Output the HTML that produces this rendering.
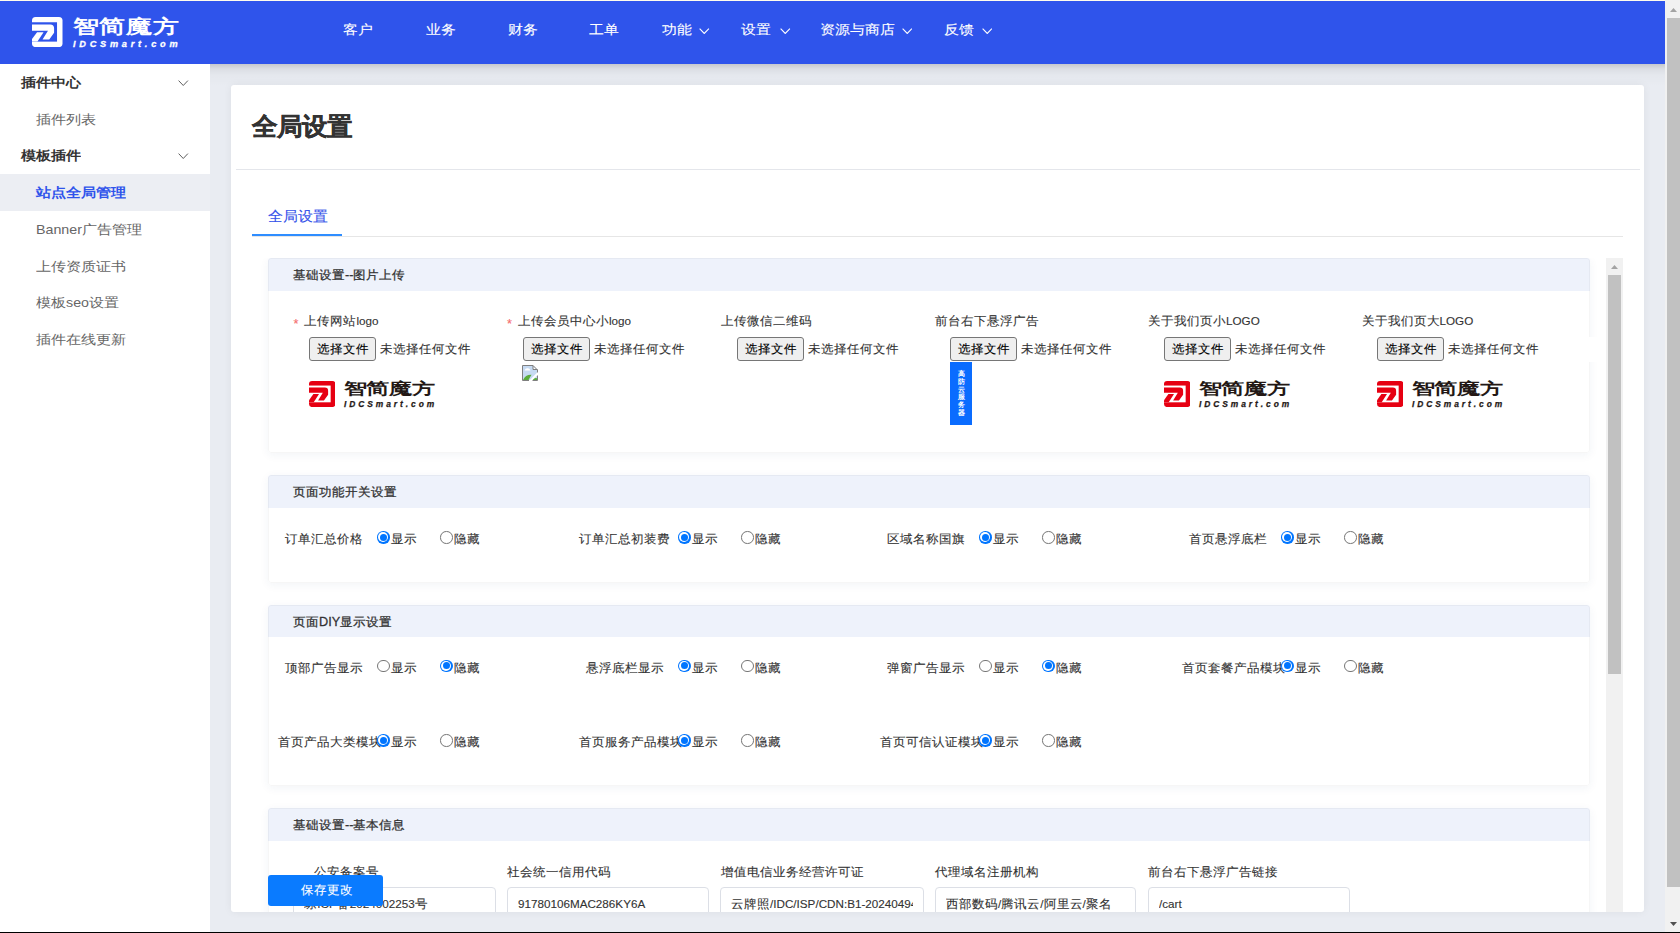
<!DOCTYPE html><html><head><meta charset="utf-8"><style>
html,body{margin:0;padding:0;}
body{width:1680px;height:933px;overflow:hidden;position:relative;background:#fff;font-family:"Liberation Sans", sans-serif;}
.a{position:absolute;display:block;}
.t{position:absolute;white-space:nowrap;-webkit-text-stroke:0.12px currentColor;}
</style></head><body>
<div class="a" style="left:0;top:0;width:1665px;height:1px;background:#fffcec"></div>
<div class="a" style="left:0;top:1px;width:1665px;height:63px;background:#2f54eb"></div>
<svg class="a" style="left:32.07px;top:16.9px" width="30.5" height="30.1" viewBox="110 115 725 715" preserveAspectRatio="none">
<rect x="110" y="115" width="725" height="715" rx="85" fill="#fff"/>
<rect x="110" y="240" width="595" height="460" fill="#2f54eb"/>
<path d="M110 295 H545 Q635 295 635 385 V490 L520 650 H360 L490 440 H110 Z" fill="#fff"/>
<path d="M110 640 L230 475 H385 L240 700 H110 Z" fill="#fff"/>
</svg>
<div class="t" style="left:72.5px;top:17.2px;font-size:26px;line-height:26px;color:#fff;font-weight:bold;-webkit-text-stroke:0;transform:scaleY(0.73);transform-origin:0 0;letter-spacing:0.8px;">智简魔方</div>
<div class="t" style="left:73px;top:40px;font-size:9.2px;line-height:9.2px;color:#fff;font-weight:bold;-webkit-text-stroke:0;font-style:italic;letter-spacing:3.75px;-webkit-text-stroke:0.3px #fff;">IDCSmart.com</div>
<div class="t" style="left:343px;top:23px;font-size:15px;line-height:15px;color:#fff;transform:scaleY(0.875);transform-origin:0 0;">客户</div>
<div class="t" style="left:426px;top:23px;font-size:15px;line-height:15px;color:#fff;transform:scaleY(0.875);transform-origin:0 0;">业务</div>
<div class="t" style="left:507.5px;top:23px;font-size:15px;line-height:15px;color:#fff;transform:scaleY(0.875);transform-origin:0 0;">财务</div>
<div class="t" style="left:589px;top:23px;font-size:15px;line-height:15px;color:#fff;transform:scaleY(0.875);transform-origin:0 0;">工单</div>
<div class="t" style="left:662px;top:23px;font-size:15px;line-height:15px;color:#fff;transform:scaleY(0.875);transform-origin:0 0;">功能</div>
<svg class="a" style="left:699px;top:27.5px" width="10.5" height="6.2" viewBox="0 0 10.5 6.2"><polyline points="0.6,0.6 5.25,5.5 9.9,0.6" fill="none" stroke="#fff" stroke-width="1.1"/></svg>
<div class="t" style="left:741px;top:23px;font-size:15px;line-height:15px;color:#fff;transform:scaleY(0.875);transform-origin:0 0;">设置</div>
<svg class="a" style="left:780px;top:27.5px" width="10.5" height="6.2" viewBox="0 0 10.5 6.2"><polyline points="0.6,0.6 5.25,5.5 9.9,0.6" fill="none" stroke="#fff" stroke-width="1.1"/></svg>
<div class="t" style="left:820px;top:23px;font-size:15px;line-height:15px;color:#fff;transform:scaleY(0.875);transform-origin:0 0;">资源与商店</div>
<svg class="a" style="left:901.5px;top:27.5px" width="10.5" height="6.2" viewBox="0 0 10.5 6.2"><polyline points="0.6,0.6 5.25,5.5 9.9,0.6" fill="none" stroke="#fff" stroke-width="1.1"/></svg>
<div class="t" style="left:943.5px;top:23px;font-size:15px;line-height:15px;color:#fff;transform:scaleY(0.875);transform-origin:0 0;">反馈</div>
<svg class="a" style="left:981.5px;top:27.5px" width="10.5" height="6.2" viewBox="0 0 10.5 6.2"><polyline points="0.6,0.6 5.25,5.5 9.9,0.6" fill="none" stroke="#fff" stroke-width="1.1"/></svg>
<div class="a" style="left:0;top:64px;width:210px;height:868px;background:#fff"></div>
<div class="a" style="left:0;top:174px;width:210px;height:37px;background:#eceef3"></div>
<div class="t" style="left:21px;top:76.2px;font-size:15px;line-height:15px;color:#333;font-weight:bold;-webkit-text-stroke:0;transform:scaleY(0.86);transform-origin:0 0;">插件中心</div>
<svg class="a" style="left:178px;top:79.5px" width="10.5" height="6.2" viewBox="0 0 10.5 6.2"><polyline points="0.6,0.6 5.25,5.5 9.9,0.6" fill="none" stroke="#555" stroke-width="0.95"/></svg>
<div class="t" style="left:36px;top:113px;font-size:15px;line-height:15px;color:#666;transform:scaleY(0.86);transform-origin:0 0;-webkit-text-stroke:0;">插件列表</div>
<div class="t" style="left:21px;top:149px;font-size:15px;line-height:15px;color:#333;font-weight:bold;-webkit-text-stroke:0;transform:scaleY(0.86);transform-origin:0 0;">模板插件</div>
<svg class="a" style="left:178px;top:152.5px" width="10.5" height="6.2" viewBox="0 0 10.5 6.2"><polyline points="0.6,0.6 5.25,5.5 9.9,0.6" fill="none" stroke="#555" stroke-width="0.95"/></svg>
<div class="t" style="left:36px;top:186px;font-size:15px;line-height:15px;color:#2f54eb;font-weight:600;-webkit-text-stroke:0;transform:scaleY(0.86);transform-origin:0 0;">站点全局管理</div>
<div class="t" style="left:36px;top:222.5px;font-size:15px;line-height:15px;color:#666;transform:scaleY(0.86);transform-origin:0 0;-webkit-text-stroke:0;"><span style="font-size:0.95em">Banner</span>广告管理</div>
<div class="t" style="left:36px;top:259.5px;font-size:15px;line-height:15px;color:#666;transform:scaleY(0.86);transform-origin:0 0;-webkit-text-stroke:0;">上传资质证书</div>
<div class="t" style="left:36px;top:296px;font-size:15px;line-height:15px;color:#666;transform:scaleY(0.86);transform-origin:0 0;-webkit-text-stroke:0;">模板<span style="font-size:0.95em">seo</span>设置</div>
<div class="t" style="left:36px;top:332.5px;font-size:15px;line-height:15px;color:#666;transform:scaleY(0.86);transform-origin:0 0;-webkit-text-stroke:0;">插件在线更新</div>
<div class="a" style="left:210px;top:64px;width:1455px;height:868px;background:#e9ecf2"></div>
<div class="a" style="left:210px;top:64px;width:1455px;height:22px;background:linear-gradient(rgba(0,0,0,0.15) 0px,rgba(0,0,0,0.06) 5px,rgba(0,0,0,0.02) 11px,rgba(0,0,0,0) 22px)"></div>
<div class="a" style="left:231px;top:85px;width:1413px;height:827px;background:#fff;border-radius:3px;box-shadow:0 0 9px rgba(0,10,30,0.06)"></div>
<div class="t" style="left:252px;top:114px;font-size:25px;line-height:25px;color:#333;font-weight:bold;-webkit-text-stroke:0;transform:scaleY(0.98);transform-origin:0 0;-webkit-text-stroke:0.35px #333;">全局设置</div>
<div class="a" style="left:236px;top:169px;width:1404px;height:1px;background:#e4e6eb"></div>
<div class="t" style="left:268px;top:209px;font-size:15px;line-height:15px;color:#3653ea;transform:scaleY(0.94);transform-origin:0 0;">全局设置</div>
<div class="a" style="left:252px;top:236px;width:1371px;height:1px;background:#e6e6e6"></div>
<div class="a" style="left:252px;top:234px;width:90px;height:2px;background:#2f8dff"></div>
<div class="a" style="left:252px;top:258px;width:1371px;height:654px;overflow:hidden">
<div class="a" style="left:16px;top:0px;width:1322px;height:195px;background:#fff;border-radius:3px;box-shadow:0 2px 10px rgba(30,60,120,0.06);overflow:hidden"><div class="a" style="left:0;top:0;width:1322px;height:32.5px;background:#eef2fb"></div><div class="a" style="left:0;top:0;width:1320px;height:193px;border:1px solid rgba(0,0,0,0.035);border-radius:3px"></div></div>
<div class="t" style="left:41px;top:11px;font-size:12.7px;line-height:12.7px;color:#333;transform:scaleY(0.96);transform-origin:0 0;-webkit-text-stroke:0.28px #333;">基础设置<span style="font-size:1.0em">--</span>图片上传</div>
<div class="a" style="left:16px;top:217px;width:1322px;height:107.5px;background:#fff;border-radius:3px;box-shadow:0 2px 10px rgba(30,60,120,0.06);overflow:hidden"><div class="a" style="left:0;top:0;width:1322px;height:33px;background:#eef2fb"></div><div class="a" style="left:0;top:0;width:1320px;height:105.5px;border:1px solid rgba(0,0,0,0.035);border-radius:3px"></div></div>
<div class="t" style="left:41px;top:228px;font-size:12.7px;line-height:12.7px;color:#333;transform:scaleY(0.96);transform-origin:0 0;-webkit-text-stroke:0.28px #333;">页面功能开关设置</div>
<div class="a" style="left:16px;top:347px;width:1322px;height:181px;background:#fff;border-radius:3px;box-shadow:0 2px 10px rgba(30,60,120,0.06);overflow:hidden"><div class="a" style="left:0;top:0;width:1322px;height:32px;background:#eef2fb"></div><div class="a" style="left:0;top:0;width:1320px;height:179px;border:1px solid rgba(0,0,0,0.035);border-radius:3px"></div></div>
<div class="t" style="left:41px;top:358px;font-size:12.7px;line-height:12.7px;color:#333;transform:scaleY(0.96);transform-origin:0 0;-webkit-text-stroke:0.28px #333;">页面<span style="font-size:1.0em">DIY</span>显示设置</div>
<div class="a" style="left:16px;top:550px;width:1322px;height:192px;background:#fff;border-radius:3px;box-shadow:0 2px 10px rgba(30,60,120,0.06);overflow:hidden"><div class="a" style="left:0;top:0;width:1322px;height:33px;background:#eef2fb"></div><div class="a" style="left:0;top:0;width:1320px;height:190px;border:1px solid rgba(0,0,0,0.035);border-radius:3px"></div></div>
<div class="t" style="left:41px;top:561px;font-size:12.7px;line-height:12.7px;color:#333;transform:scaleY(0.96);transform-origin:0 0;-webkit-text-stroke:0.28px #333;">基础设置<span style="font-size:1.0em">--</span>基本信息</div>
<div class="t" style="left:41.39999999999998px;top:59.5px;font-size:12.7px;line-height:12.7px;color:#f56c6c;">*</div>
<div class="t" style="left:52.39999999999998px;top:57px;font-size:12.7px;line-height:12.7px;color:#333;transform:scaleY(0.96);transform-origin:0 0;">上传网站<span style="font-size:0.92em">logo</span></div>
<div class="a" style="left:57.099999999999966px;top:79px;width:65px;height:22px;background:#efefef;border:1px solid #767676;border-radius:3px"></div>
<div class="t" style="left:65.09999999999997px;top:85px;font-size:12.7px;line-height:12.7px;color:#000;transform:scaleY(0.96);transform-origin:0 0;">选择文件</div>
<div class="t" style="left:128.09999999999997px;top:85px;font-size:12.7px;line-height:12.7px;color:#333;transform:scaleY(0.96);transform-origin:0 0;">未选择任何文件</div>
<div class="t" style="left:255px;top:59.5px;font-size:12.7px;line-height:12.7px;color:#f56c6c;">*</div>
<div class="t" style="left:266px;top:57px;font-size:12.7px;line-height:12.7px;color:#333;transform:scaleY(0.96);transform-origin:0 0;">上传会员中心小<span style="font-size:0.92em">logo</span></div>
<div class="a" style="left:270.70000000000005px;top:79px;width:65px;height:22px;background:#efefef;border:1px solid #767676;border-radius:3px"></div>
<div class="t" style="left:278.70000000000005px;top:85px;font-size:12.7px;line-height:12.7px;color:#000;transform:scaleY(0.96);transform-origin:0 0;">选择文件</div>
<div class="t" style="left:341.70000000000005px;top:85px;font-size:12.7px;line-height:12.7px;color:#333;transform:scaleY(0.96);transform-origin:0 0;">未选择任何文件</div>
<div class="t" style="left:469px;top:57px;font-size:12.7px;line-height:12.7px;color:#333;transform:scaleY(0.96);transform-origin:0 0;">上传微信二维码</div>
<div class="a" style="left:484.70000000000005px;top:79px;width:65px;height:22px;background:#efefef;border:1px solid #767676;border-radius:3px"></div>
<div class="t" style="left:492.70000000000005px;top:85px;font-size:12.7px;line-height:12.7px;color:#000;transform:scaleY(0.96);transform-origin:0 0;">选择文件</div>
<div class="t" style="left:555.7px;top:85px;font-size:12.7px;line-height:12.7px;color:#333;transform:scaleY(0.96);transform-origin:0 0;">未选择任何文件</div>
<div class="t" style="left:682.5px;top:57px;font-size:12.7px;line-height:12.7px;color:#333;transform:scaleY(0.96);transform-origin:0 0;">前台右下悬浮广告</div>
<div class="a" style="left:698.2px;top:79px;width:65px;height:22px;background:#efefef;border:1px solid #767676;border-radius:3px"></div>
<div class="t" style="left:706.2px;top:85px;font-size:12.7px;line-height:12.7px;color:#000;transform:scaleY(0.96);transform-origin:0 0;">选择文件</div>
<div class="t" style="left:769.2px;top:85px;font-size:12.7px;line-height:12.7px;color:#333;transform:scaleY(0.96);transform-origin:0 0;">未选择任何文件</div>
<div class="t" style="left:896px;top:57px;font-size:12.7px;line-height:12.7px;color:#333;transform:scaleY(0.96);transform-origin:0 0;">关于我们页小<span style="font-size:0.92em">LOGO</span></div>
<div class="a" style="left:911.7px;top:79px;width:65px;height:22px;background:#efefef;border:1px solid #767676;border-radius:3px"></div>
<div class="t" style="left:919.7px;top:85px;font-size:12.7px;line-height:12.7px;color:#000;transform:scaleY(0.96);transform-origin:0 0;">选择文件</div>
<div class="t" style="left:982.7px;top:85px;font-size:12.7px;line-height:12.7px;color:#333;transform:scaleY(0.96);transform-origin:0 0;">未选择任何文件</div>
<div class="t" style="left:1109.5px;top:57px;font-size:12.7px;line-height:12.7px;color:#333;transform:scaleY(0.96);transform-origin:0 0;">关于我们页大<span style="font-size:0.92em">LOGO</span></div>
<div class="a" style="left:1125.2px;top:79px;width:65px;height:22px;background:#efefef;border:1px solid #767676;border-radius:3px"></div>
<div class="t" style="left:1133.2px;top:85px;font-size:12.7px;line-height:12.7px;color:#000;transform:scaleY(0.96);transform-origin:0 0;">选择文件</div>
<div class="t" style="left:1196.2px;top:85px;font-size:12.7px;line-height:12.7px;color:#333;transform:scaleY(0.96);transform-origin:0 0;">未选择任何文件</div>
<svg class="a" style="left:57px;top:122.5px" width="26.4" height="26.06" viewBox="110 115 725 715" preserveAspectRatio="none">
<rect x="110" y="115" width="725" height="715" rx="85" fill="#e60012"/>
<rect x="110" y="240" width="595" height="460" fill="#fff"/>
<path d="M110 295 H545 Q635 295 635 385 V490 L520 650 H360 L490 440 H110 Z" fill="#e60012"/>
<path d="M110 640 L230 475 H385 L240 700 H110 Z" fill="#e60012"/>
</svg>
<div class="t" style="left:91.5px;top:123px;font-size:23px;line-height:23px;color:#231815;font-weight:bold;-webkit-text-stroke:0;transform:scaleY(0.69);transform-origin:0 0;letter-spacing:-0.2px">智简魔方</div>
<div class="t" style="left:92px;top:141.5px;font-size:8.4px;line-height:8.4px;color:#231815;font-weight:bold;-webkit-text-stroke:0;font-style:italic;letter-spacing:2.95px;-webkit-text-stroke:0.25px #231815;">IDCSmart.com</div>
<svg class="a" style="left:912px;top:122.5px" width="26.4" height="26.06" viewBox="110 115 725 715" preserveAspectRatio="none">
<rect x="110" y="115" width="725" height="715" rx="85" fill="#e60012"/>
<rect x="110" y="240" width="595" height="460" fill="#fff"/>
<path d="M110 295 H545 Q635 295 635 385 V490 L520 650 H360 L490 440 H110 Z" fill="#e60012"/>
<path d="M110 640 L230 475 H385 L240 700 H110 Z" fill="#e60012"/>
</svg>
<div class="t" style="left:946.5px;top:123px;font-size:23px;line-height:23px;color:#231815;font-weight:bold;-webkit-text-stroke:0;transform:scaleY(0.69);transform-origin:0 0;letter-spacing:-0.2px">智简魔方</div>
<div class="t" style="left:947px;top:141.5px;font-size:8.4px;line-height:8.4px;color:#231815;font-weight:bold;-webkit-text-stroke:0;font-style:italic;letter-spacing:2.95px;-webkit-text-stroke:0.25px #231815;">IDCSmart.com</div>
<svg class="a" style="left:1125px;top:122.5px" width="26.4" height="26.06" viewBox="110 115 725 715" preserveAspectRatio="none">
<rect x="110" y="115" width="725" height="715" rx="85" fill="#e60012"/>
<rect x="110" y="240" width="595" height="460" fill="#fff"/>
<path d="M110 295 H545 Q635 295 635 385 V490 L520 650 H360 L490 440 H110 Z" fill="#e60012"/>
<path d="M110 640 L230 475 H385 L240 700 H110 Z" fill="#e60012"/>
</svg>
<div class="t" style="left:1159.5px;top:123px;font-size:23px;line-height:23px;color:#231815;font-weight:bold;-webkit-text-stroke:0;transform:scaleY(0.69);transform-origin:0 0;letter-spacing:-0.2px">智简魔方</div>
<div class="t" style="left:1160px;top:141.5px;font-size:8.4px;line-height:8.4px;color:#231815;font-weight:bold;-webkit-text-stroke:0;font-style:italic;letter-spacing:2.95px;-webkit-text-stroke:0.25px #231815;">IDCSmart.com</div>
<svg class="a" style="left:270px;top:107px" width="16" height="16" viewBox="0 0 16 16">
<rect x="1" y="1" width="14" height="14" fill="#c6daf2"/>
<path d="M10.5 0 H16 V5.5 Z" fill="#fff"/>
<path d="M11 1 L15 5 H11 Z" fill="#fff"/>
<path d="M2.5 5.5 Q3.5 3 5.5 3.3 Q7.5 3 8.5 5.5 Z" fill="#fff"/>
<path d="M1 15 Q3.5 9.5 9.5 9.8 L6.5 15 Z" fill="#5aad3c"/>
<path d="M10.5 15 Q12 12.3 15 13.2 V15 Z" fill="#5aad3c"/>
<path d="M6.8 16 L9.6 16 L16 9.6 L16 6.8 Z" fill="#fff"/>
<path d="M0.5 15.5 V0.5 H11 L15.5 5 V7.5 M15.5 10.5 V15.5 H10.5 M7 15.5 H0.5 M11 0.5 V4.5 H15.5" fill="none" stroke="#7f7f7f" stroke-width="1"/>
</svg>
<div class="a" style="left:698px;top:104px;width:22px;height:63px;background:#0a6cff"></div>
<div class="a" style="left:705px;top:112px;width:8px;font-size:7px;line-height:7.8px;font-weight:bold;color:#fff;text-align:center">高防云服务器</div>
<div class="t" style="left:25.5px;top:275.20000000000005px;width:85.5px;text-align:right;font-size:12.7px;line-height:12.7px;color:#333;transform:scaleY(0.96);transform-origin:0 0">订单汇总价格</div>
<div class="a" style="left:125px;top:273.1px;width:12.5px;height:12.5px;border-radius:50%;background:#0075ff"></div>
<div class="a" style="left:126.19999999999999px;top:274.30000000000007px;width:10.1px;height:10.1px;border-radius:50%;background:#fff"></div>
<div class="a" style="left:127.60000000000002px;top:275.70000000000005px;width:7.3px;height:7.3px;border-radius:50%;background:#0075ff"></div>
<div class="t" style="left:138.5px;top:275.20000000000005px;font-size:12.7px;line-height:12.7px;color:#333;transform:scaleY(0.96);transform-origin:0 0;">显示</div>
<div class="a" style="left:188px;top:273.1px;width:12.5px;height:12.5px;border-radius:50%;border:1px solid #767676;box-sizing:border-box;background:#fff"></div>
<div class="t" style="left:201.5px;top:275.20000000000005px;font-size:12.7px;line-height:12.7px;color:#333;transform:scaleY(0.96);transform-origin:0 0;">隐藏</div>
<div class="t" style="left:326.5px;top:275.20000000000005px;width:85.5px;text-align:right;font-size:12.7px;line-height:12.7px;color:#333;transform:scaleY(0.96);transform-origin:0 0">订单汇总初装费</div>
<div class="a" style="left:426px;top:273.1px;width:12.5px;height:12.5px;border-radius:50%;background:#0075ff"></div>
<div class="a" style="left:427.20000000000005px;top:274.30000000000007px;width:10.1px;height:10.1px;border-radius:50%;background:#fff"></div>
<div class="a" style="left:428.6px;top:275.70000000000005px;width:7.3px;height:7.3px;border-radius:50%;background:#0075ff"></div>
<div class="t" style="left:439.5px;top:275.20000000000005px;font-size:12.7px;line-height:12.7px;color:#333;transform:scaleY(0.96);transform-origin:0 0;">显示</div>
<div class="a" style="left:489px;top:273.1px;width:12.5px;height:12.5px;border-radius:50%;border:1px solid #767676;box-sizing:border-box;background:#fff"></div>
<div class="t" style="left:502.5px;top:275.20000000000005px;font-size:12.7px;line-height:12.7px;color:#333;transform:scaleY(0.96);transform-origin:0 0;">隐藏</div>
<div class="t" style="left:627.5px;top:275.20000000000005px;width:85.5px;text-align:right;font-size:12.7px;line-height:12.7px;color:#333;transform:scaleY(0.96);transform-origin:0 0">区域名称国旗</div>
<div class="a" style="left:727px;top:273.1px;width:12.5px;height:12.5px;border-radius:50%;background:#0075ff"></div>
<div class="a" style="left:728.2px;top:274.30000000000007px;width:10.1px;height:10.1px;border-radius:50%;background:#fff"></div>
<div class="a" style="left:729.6px;top:275.70000000000005px;width:7.3px;height:7.3px;border-radius:50%;background:#0075ff"></div>
<div class="t" style="left:740.5px;top:275.20000000000005px;font-size:12.7px;line-height:12.7px;color:#333;transform:scaleY(0.96);transform-origin:0 0;">显示</div>
<div class="a" style="left:790px;top:273.1px;width:12.5px;height:12.5px;border-radius:50%;border:1px solid #767676;box-sizing:border-box;background:#fff"></div>
<div class="t" style="left:803.5px;top:275.20000000000005px;font-size:12.7px;line-height:12.7px;color:#333;transform:scaleY(0.96);transform-origin:0 0;">隐藏</div>
<div class="t" style="left:929.5px;top:275.20000000000005px;width:85.5px;text-align:right;font-size:12.7px;line-height:12.7px;color:#333;transform:scaleY(0.96);transform-origin:0 0">首页悬浮底栏</div>
<div class="a" style="left:1029px;top:273.1px;width:12.5px;height:12.5px;border-radius:50%;background:#0075ff"></div>
<div class="a" style="left:1030.2px;top:274.30000000000007px;width:10.1px;height:10.1px;border-radius:50%;background:#fff"></div>
<div class="a" style="left:1031.6px;top:275.70000000000005px;width:7.3px;height:7.3px;border-radius:50%;background:#0075ff"></div>
<div class="t" style="left:1042.5px;top:275.20000000000005px;font-size:12.7px;line-height:12.7px;color:#333;transform:scaleY(0.96);transform-origin:0 0;">显示</div>
<div class="a" style="left:1092px;top:273.1px;width:12.5px;height:12.5px;border-radius:50%;border:1px solid #767676;box-sizing:border-box;background:#fff"></div>
<div class="t" style="left:1105.5px;top:275.20000000000005px;font-size:12.7px;line-height:12.7px;color:#333;transform:scaleY(0.96);transform-origin:0 0;">隐藏</div>
<div class="t" style="left:25.5px;top:403.70000000000005px;width:85.5px;text-align:right;font-size:12.7px;line-height:12.7px;color:#333;transform:scaleY(0.96);transform-origin:0 0">顶部广告显示</div>
<div class="a" style="left:125px;top:401.6px;width:12.5px;height:12.5px;border-radius:50%;border:1px solid #767676;box-sizing:border-box;background:#fff"></div>
<div class="t" style="left:138.5px;top:403.70000000000005px;font-size:12.7px;line-height:12.7px;color:#333;transform:scaleY(0.96);transform-origin:0 0;">显示</div>
<div class="a" style="left:188px;top:401.6px;width:12.5px;height:12.5px;border-radius:50%;background:#0075ff"></div>
<div class="a" style="left:189.2px;top:402.80000000000007px;width:10.1px;height:10.1px;border-radius:50%;background:#fff"></div>
<div class="a" style="left:190.60000000000002px;top:404.20000000000005px;width:7.3px;height:7.3px;border-radius:50%;background:#0075ff"></div>
<div class="t" style="left:201.5px;top:403.70000000000005px;font-size:12.7px;line-height:12.7px;color:#333;transform:scaleY(0.96);transform-origin:0 0;">隐藏</div>
<div class="t" style="left:326.5px;top:403.70000000000005px;width:85.5px;text-align:right;font-size:12.7px;line-height:12.7px;color:#333;transform:scaleY(0.96);transform-origin:0 0">悬浮底栏显示</div>
<div class="a" style="left:426px;top:401.6px;width:12.5px;height:12.5px;border-radius:50%;background:#0075ff"></div>
<div class="a" style="left:427.20000000000005px;top:402.80000000000007px;width:10.1px;height:10.1px;border-radius:50%;background:#fff"></div>
<div class="a" style="left:428.6px;top:404.20000000000005px;width:7.3px;height:7.3px;border-radius:50%;background:#0075ff"></div>
<div class="t" style="left:439.5px;top:403.70000000000005px;font-size:12.7px;line-height:12.7px;color:#333;transform:scaleY(0.96);transform-origin:0 0;">显示</div>
<div class="a" style="left:489px;top:401.6px;width:12.5px;height:12.5px;border-radius:50%;border:1px solid #767676;box-sizing:border-box;background:#fff"></div>
<div class="t" style="left:502.5px;top:403.70000000000005px;font-size:12.7px;line-height:12.7px;color:#333;transform:scaleY(0.96);transform-origin:0 0;">隐藏</div>
<div class="t" style="left:627.5px;top:403.70000000000005px;width:85.5px;text-align:right;font-size:12.7px;line-height:12.7px;color:#333;transform:scaleY(0.96);transform-origin:0 0">弹窗广告显示</div>
<div class="a" style="left:727px;top:401.6px;width:12.5px;height:12.5px;border-radius:50%;border:1px solid #767676;box-sizing:border-box;background:#fff"></div>
<div class="t" style="left:740.5px;top:403.70000000000005px;font-size:12.7px;line-height:12.7px;color:#333;transform:scaleY(0.96);transform-origin:0 0;">显示</div>
<div class="a" style="left:790px;top:401.6px;width:12.5px;height:12.5px;border-radius:50%;background:#0075ff"></div>
<div class="a" style="left:791.2px;top:402.80000000000007px;width:10.1px;height:10.1px;border-radius:50%;background:#fff"></div>
<div class="a" style="left:792.5999999999999px;top:404.20000000000005px;width:7.3px;height:7.3px;border-radius:50%;background:#0075ff"></div>
<div class="t" style="left:803.5px;top:403.70000000000005px;font-size:12.7px;line-height:12.7px;color:#333;transform:scaleY(0.96);transform-origin:0 0;">隐藏</div>
<div class="t" style="left:929.5px;top:403.70000000000005px;width:85.5px;text-align:right;font-size:12.7px;line-height:12.7px;color:#333;transform:scaleY(0.96);transform-origin:0 0">首页套餐产品模块</div>
<div class="a" style="left:1029px;top:401.6px;width:12.5px;height:12.5px;border-radius:50%;background:#0075ff"></div>
<div class="a" style="left:1030.2px;top:402.80000000000007px;width:10.1px;height:10.1px;border-radius:50%;background:#fff"></div>
<div class="a" style="left:1031.6px;top:404.20000000000005px;width:7.3px;height:7.3px;border-radius:50%;background:#0075ff"></div>
<div class="t" style="left:1042.5px;top:403.70000000000005px;font-size:12.7px;line-height:12.7px;color:#333;transform:scaleY(0.96);transform-origin:0 0;">显示</div>
<div class="a" style="left:1092px;top:401.6px;width:12.5px;height:12.5px;border-radius:50%;border:1px solid #767676;box-sizing:border-box;background:#fff"></div>
<div class="t" style="left:1105.5px;top:403.70000000000005px;font-size:12.7px;line-height:12.7px;color:#333;transform:scaleY(0.96);transform-origin:0 0;">隐藏</div>
<div class="t" style="left:25.5px;top:478.20000000000005px;width:85.5px;text-align:right;font-size:12.7px;line-height:12.7px;color:#333;transform:scaleY(0.96);transform-origin:0 0">首页产品大类模块</div>
<div class="a" style="left:125px;top:476.1px;width:12.5px;height:12.5px;border-radius:50%;background:#0075ff"></div>
<div class="a" style="left:126.19999999999999px;top:477.30000000000007px;width:10.1px;height:10.1px;border-radius:50%;background:#fff"></div>
<div class="a" style="left:127.60000000000002px;top:478.70000000000005px;width:7.3px;height:7.3px;border-radius:50%;background:#0075ff"></div>
<div class="t" style="left:138.5px;top:478.20000000000005px;font-size:12.7px;line-height:12.7px;color:#333;transform:scaleY(0.96);transform-origin:0 0;">显示</div>
<div class="a" style="left:188px;top:476.1px;width:12.5px;height:12.5px;border-radius:50%;border:1px solid #767676;box-sizing:border-box;background:#fff"></div>
<div class="t" style="left:201.5px;top:478.20000000000005px;font-size:12.7px;line-height:12.7px;color:#333;transform:scaleY(0.96);transform-origin:0 0;">隐藏</div>
<div class="t" style="left:326.5px;top:478.20000000000005px;width:85.5px;text-align:right;font-size:12.7px;line-height:12.7px;color:#333;transform:scaleY(0.96);transform-origin:0 0">首页服务产品模块</div>
<div class="a" style="left:426px;top:476.1px;width:12.5px;height:12.5px;border-radius:50%;background:#0075ff"></div>
<div class="a" style="left:427.20000000000005px;top:477.30000000000007px;width:10.1px;height:10.1px;border-radius:50%;background:#fff"></div>
<div class="a" style="left:428.6px;top:478.70000000000005px;width:7.3px;height:7.3px;border-radius:50%;background:#0075ff"></div>
<div class="t" style="left:439.5px;top:478.20000000000005px;font-size:12.7px;line-height:12.7px;color:#333;transform:scaleY(0.96);transform-origin:0 0;">显示</div>
<div class="a" style="left:489px;top:476.1px;width:12.5px;height:12.5px;border-radius:50%;border:1px solid #767676;box-sizing:border-box;background:#fff"></div>
<div class="t" style="left:502.5px;top:478.20000000000005px;font-size:12.7px;line-height:12.7px;color:#333;transform:scaleY(0.96);transform-origin:0 0;">隐藏</div>
<div class="t" style="left:627.5px;top:478.20000000000005px;width:85.5px;text-align:right;font-size:12.7px;line-height:12.7px;color:#333;transform:scaleY(0.96);transform-origin:0 0">首页可信认证模块</div>
<div class="a" style="left:727px;top:476.1px;width:12.5px;height:12.5px;border-radius:50%;background:#0075ff"></div>
<div class="a" style="left:728.2px;top:477.30000000000007px;width:10.1px;height:10.1px;border-radius:50%;background:#fff"></div>
<div class="a" style="left:729.6px;top:478.70000000000005px;width:7.3px;height:7.3px;border-radius:50%;background:#0075ff"></div>
<div class="t" style="left:740.5px;top:478.20000000000005px;font-size:12.7px;line-height:12.7px;color:#333;transform:scaleY(0.96);transform-origin:0 0;">显示</div>
<div class="a" style="left:790px;top:476.1px;width:12.5px;height:12.5px;border-radius:50%;border:1px solid #767676;box-sizing:border-box;background:#fff"></div>
<div class="t" style="left:803.5px;top:478.20000000000005px;font-size:12.7px;line-height:12.7px;color:#333;transform:scaleY(0.96);transform-origin:0 0;">隐藏</div>
<div class="a" style="left:1337px;top:79px;width:12px;height:25px;background:#fff"></div>
<div class="t" style="left:62px;top:608px;font-size:12.7px;line-height:12.7px;color:#333;transform:scaleY(0.96);transform-origin:0 0;">公安备案号</div>
<div class="a" style="left:41.25px;top:629px;width:202.4px;height:40px;border:1px solid #dcdfe6;border-radius:4px;box-sizing:border-box;background:#fff;overflow:hidden"><div class="a" style="left:10px;top:0;width:180.4px;height:38px;overflow:hidden"><div class="t" style="left:0;top:10px;font-size:12.7px;line-height:12.7px;color:#333;transform:scaleY(0.96);transform-origin:0 0">琼<span style="font-size:0.92em">ICP</span>备<span style="font-size:0.92em">2024002253</span>号</div></div></div>
<div class="t" style="left:255px;top:608px;font-size:12.7px;line-height:12.7px;color:#333;transform:scaleY(0.96);transform-origin:0 0;">社会统一信用代码</div>
<div class="a" style="left:255px;top:629px;width:202px;height:40px;border:1px solid #dcdfe6;border-radius:4px;box-sizing:border-box;background:#fff;overflow:hidden"><div class="a" style="left:10px;top:0;width:180px;height:38px;overflow:hidden"><div class="t" style="left:0;top:10px;font-size:12.7px;line-height:12.7px;color:#333;transform:scaleY(0.96);transform-origin:0 0"><span style="font-size:0.92em">91780106MAC286KY6A</span></div></div></div>
<div class="t" style="left:469px;top:608px;font-size:12.7px;line-height:12.7px;color:#333;transform:scaleY(0.96);transform-origin:0 0;">增值电信业务经营许可证</div>
<div class="a" style="left:468px;top:629px;width:203.7px;height:40px;border:1px solid #dcdfe6;border-radius:4px;box-sizing:border-box;background:#fff;overflow:hidden"><div class="a" style="left:10px;top:0;width:181.7px;height:38px;overflow:hidden"><div class="t" style="left:0;top:10px;font-size:12.7px;line-height:12.7px;color:#333;transform:scaleY(0.96);transform-origin:0 0">云牌照<span style="font-size:0.92em">/IDC/ISP/CDN:B1-20240494</span></div></div></div>
<div class="t" style="left:682.5px;top:608px;font-size:12.7px;line-height:12.7px;color:#333;transform:scaleY(0.96);transform-origin:0 0;">代理域名注册机构</div>
<div class="a" style="left:683px;top:629px;width:201px;height:40px;border:1px solid #dcdfe6;border-radius:4px;box-sizing:border-box;background:#fff;overflow:hidden"><div class="a" style="left:10px;top:0;width:179px;height:38px;overflow:hidden"><div class="t" style="left:0;top:10px;font-size:12.7px;line-height:12.7px;color:#333;transform:scaleY(0.96);transform-origin:0 0">西部数码<span style="font-size:0.92em">/</span>腾讯云<span style="font-size:0.92em">/</span>阿里云<span style="font-size:0.92em">/</span>聚名</div></div></div>
<div class="t" style="left:896px;top:608px;font-size:12.7px;line-height:12.7px;color:#333;transform:scaleY(0.96);transform-origin:0 0;">前台右下悬浮广告链接</div>
<div class="a" style="left:896px;top:629px;width:202px;height:40px;border:1px solid #dcdfe6;border-radius:4px;box-sizing:border-box;background:#fff;overflow:hidden"><div class="a" style="left:10px;top:0;width:180px;height:38px;overflow:hidden"><div class="t" style="left:0;top:10px;font-size:12.7px;line-height:12.7px;color:#333;transform:scaleY(0.96);transform-origin:0 0"><span style="font-size:0.92em">/cart</span></div></div></div>
</div>
<div class="a" style="left:1606px;top:258px;width:17px;height:654px;background:#f1f1f1"></div>
<div class="a" style="left:1608px;top:275px;width:13px;height:399px;background:#c1c1c1"></div>
<svg class="a" style="left:1611px;top:265px" width="7" height="4" viewBox="0 0 7 4"><path d="M0 4 L3.5 0 L7 4 Z" fill="#a3a3a3"/></svg>
<div class="a" style="left:268px;top:875px;width:115px;height:31px;background:#0a7bff;border-radius:3px"></div>
<div class="t" style="left:301px;top:884px;font-size:12.7px;line-height:12.7px;color:#fff;transform:scaleY(0.96);transform-origin:0 0;">保存更改</div>
<div class="a" style="left:1665px;top:0;width:15px;height:932px;background:#f1f1f1"></div>
<div class="a" style="left:1667px;top:18px;width:13px;height:869px;background:#c1c1c1"></div>
<svg class="a" style="left:1670px;top:8px" width="7" height="4" viewBox="0 0 7 4"><path d="M0 4 L3.5 0 L7 4 Z" fill="#a3a3a3"/></svg>
<svg class="a" style="left:1670px;top:922px" width="7" height="4" viewBox="0 0 7 4"><path d="M0 0 L3.5 4 L7 0 Z" fill="#505050"/></svg>
<div class="a" style="left:0;top:932px;width:1680px;height:1px;background:#000"></div>
</body></html>
